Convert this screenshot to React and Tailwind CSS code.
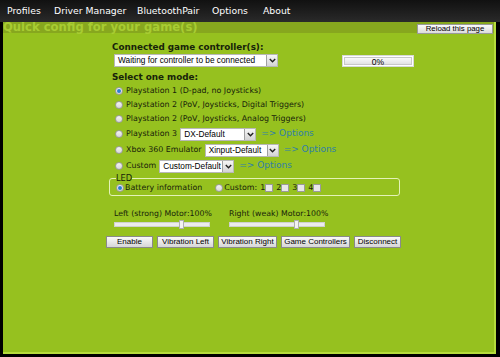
import React from 'react';

const font = { fontFamily: '"DejaVu Sans", Verdana, sans-serif' };

const Radio = ({ checked }) => (
  <span className="inline-flex items-center justify-center w-[8px] h-[8px] rounded-full border border-[#9a9a9a] bg-gradient-to-b from-[#f4f4f4] to-[#d8d8d8] shrink-0">
    {checked && <span className="w-[4px] h-[4px] rounded-full bg-[#2a7fd4]" />}
  </span>
);

const Check = () => (
  <span className="inline-block w-[8px] h-[8px] border border-[#9a9a9a] bg-[#e8e8e8] shrink-0" />
);

const Select = ({ value, width }) => (
  <div className={`flex items-stretch h-[13px] bg-white border border-[#b8b8b8] ${width}`}>
    <span className="flex-1 pl-[3px] text-[8.3px] leading-[11px] text-black font-['Liberation_Sans',Arial,sans-serif] truncate">{value}</span>
    <span className="w-[11px] flex items-center justify-center bg-gradient-to-b from-[#f6f6f6] to-[#d4d4d4] border-l border-[#a0a0a0]">
      <svg width="7" height="5" viewBox="0 0 7 5"><path d="M0.8 1 L3.5 3.8 L6.2 1" stroke="#222" strokeWidth="1.4" fill="none" /></svg>
    </span>
  </div>
);

const Options = () => <span className="text-[#2f7fa8] text-[9px] ml-[2px]">=&gt; Options</span>;

const Btn = ({ children, width }) => (
  <button className={`h-[12px] ${width} border border-[#8a8a8a] bg-gradient-to-b from-[#fafafa] to-[#d6d6d6] text-[8px] leading-[10px] text-black font-['Liberation_Sans',Arial,sans-serif] px-[2px] whitespace-nowrap`}>
    {children}
  </button>
);

const Slider = ({ label }) => (
  <div className="flex flex-col w-[96px]">
    <span className="text-[7.8px] leading-[10px] whitespace-nowrap">{label}</span>
    <div className="relative h-[9px] mt-[1px] flex items-center">
      <div className="w-full h-[5px] bg-[#ececec] border border-[#d0d0d0]" />
      <span className="absolute left-[65px] top-0 w-[5px] h-[9px] bg-[#f2f2f2] border border-[#b0b0b0]" />
    </div>
  </div>
);

const modes = [
  { label: 'Playstation 1 (D-pad, no Joysticks)', checked: true },
  { label: 'Playstation 2 (PoV, Joysticks, Digital Triggers)' },
  { label: 'Playstation 2 (PoV, Joysticks, Analog Triggers)' },
  { label: 'Playstation 3', select: 'DX-Default', width: 'w-[76px]' },
  { label: 'Xbox 360 Emulator', select: 'Xinput-Default', width: 'w-[74px]' },
  { label: 'Custom', select: 'Custom-Default', width: 'w-[75px]' },
];

const nav = [
  ['Profiles', 'w-[47px]'],
  ['Driver Manager', 'w-[83px]'],
  ['BluetoothPair', 'w-[75px]'],
  ['Options', 'w-[51px]'],
  ['About', 'w-[40px]'],
];

export default function App() {
  return (
    <div className="w-[500px] h-[357px] bg-black flex flex-col overflow-hidden text-[#17230a]" style={font}>
      <nav className="h-[22px] shrink-0 flex items-center pl-[7px] bg-gradient-to-b from-[#111] to-[#2a2a2a] text-white text-[9.3px]">
        {nav.map(([t, w]) => (
          <span key={t} className={`${w} whitespace-nowrap`}>{t}</span>
        ))}
      </nav>

      <main className="flex-1 ml-[3px] mr-[4px] mb-[3px] bg-[#96c11f] border-r-2 border-b-2 border-[#b5dc3c] flex flex-col">
        <div className="h-[11px] bg-[#87a71e] flex items-center justify-between">
          <h1 className="text-[11.6px] font-bold leading-[11px] text-[#a8cc32] whitespace-nowrap">Quick config for your game(s)</h1>
          <button className="h-[10px] w-[76px] mr-[1px] mt-[2px] self-start bg-gradient-to-b from-[#fbfbfb] to-[#dcdcdc] border border-[#9a9a9a] text-[7.8px] leading-[8px] text-black font-['Liberation_Sans',Arial,sans-serif]">
            Reload this page
          </button>
        </div>

        <div className="pl-[109px] pt-[9px] flex flex-col">
          <h2 className="text-[8.8px] font-bold leading-[11px]">Connected game controller(s):</h2>
          <div className="flex items-center mt-[1px] ml-[2px]">
            <Select value="Waiting for controller to be connected" width="w-[164px]" />
            <div className="ml-[64px] w-[72px] h-[12px] bg-white border border-[#d8d8d8] p-[1px] flex">
              <div className="flex-1 border border-[#c8c8c8] bg-gradient-to-b from-[#fafafa] to-[#e2e2e2] text-[8.5px] leading-[8px] text-center text-black font-['Liberation_Sans',Arial,sans-serif]">0%</div>
            </div>
          </div>

          <h2 className="text-[8.8px] font-bold leading-[11px] mt-[5px]">Select one mode:</h2>
          <div className="flex flex-col ml-[3px] mt-[1px]">
            {modes.map((m, i) => (
              <div key={i} className={`flex items-center gap-[3px] ${m.select ? 'h-[16px]' : 'h-[14px]'} text-[7.9px]`}>
                <Radio checked={m.checked} />
                <span className="whitespace-nowrap">{m.label}</span>
                {m.select && <Select value={m.select} width={m.width} />}
                {m.select && <Options />}
              </div>
            ))}
          </div>

          <fieldset className="ml-[-3px] w-[291px] border border-[#e4f2b8] rounded-[3px] px-[6px] pb-[2px] mt-[0px] text-[7.9px]">
            <legend className="text-[8.3px] leading-[8px] px-0">LED</legend>
            <div className="flex items-center h-[11px]">
              <Radio checked />
              <span className="ml-[1px]">Battery information</span>
              <span className="ml-[13px] flex items-center">
                <Radio />
                <span className="ml-[1px]">Custom:</span>
                <span className="ml-[3px]">1</span><Check />
                <span className="ml-[3px]">2</span><Check />
                <span className="ml-[3px]">3</span><Check />
                <span className="ml-[3px]">4</span><Check />
              </span>
            </div>
          </fieldset>

          <div className="flex gap-[19px] mt-[13px] ml-[2px]">
            <Slider label="Left (strong) Motor:100%" />
            <Slider label="Right (weak) Motor:100%" />
          </div>

          <div className="flex gap-[4px] mt-[7px] ml-[-6px]">
            <Btn width="w-[47px]">Enable</Btn>
            <Btn width="w-[57px]">Vibration Left</Btn>
            <Btn width="w-[59px]">Vibration Right</Btn>
            <Btn width="w-[69px]">Game Controllers</Btn>
            <Btn width="w-[47px]">Disconnect</Btn>
          </div>
        </div>
      </main>
    </div>
  );
}
